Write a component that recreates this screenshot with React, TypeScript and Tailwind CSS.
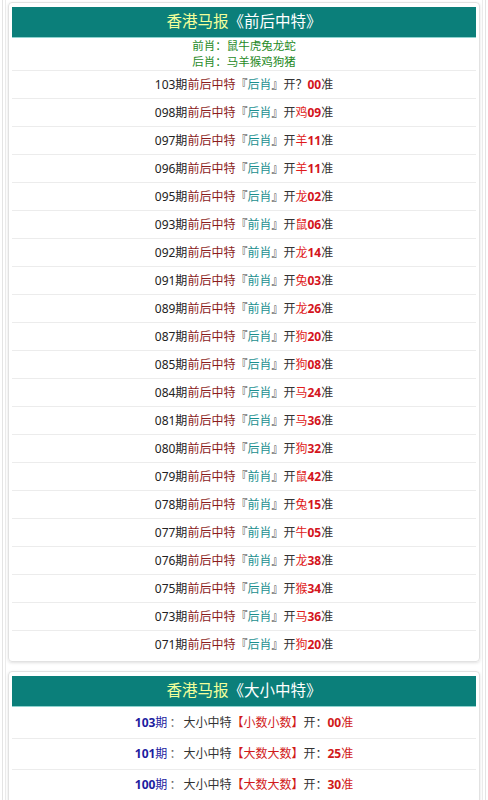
import React from 'react';

const rows: Array<[string, string, string, string]> = [
  ['103', '后肖', '？', '00'],
  ['098', '后肖', '鸡', '09'],
  ['097', '后肖', '羊', '11'],
  ['096', '后肖', '羊', '11'],
  ['095', '后肖', '龙', '02'],
  ['093', '前肖', '鼠', '06'],
  ['092', '前肖', '龙', '14'],
  ['091', '前肖', '兔', '03'],
  ['089', '前肖', '龙', '26'],
  ['087', '后肖', '狗', '20'],
  ['085', '后肖', '狗', '08'],
  ['084', '后肖', '马', '24'],
  ['081', '后肖', '马', '36'],
  ['080', '后肖', '狗', '32'],
  ['079', '前肖', '鼠', '42'],
  ['078', '前肖', '兔', '15'],
  ['077', '前肖', '牛', '05'],
  ['076', '前肖', '龙', '38'],
  ['075', '后肖', '猴', '34'],
  ['073', '后肖', '马', '36'],
  ['071', '后肖', '狗', '20'],
];

const sizeRows: Array<[string, string, string]> = [
  ['103', '小数小数', '00'],
  ['101', '大数大数', '25'],
  ['100', '大数大数', '30'],
];

const Header = ({ name }: { name: string }) => (
  <div className="bg-[#0b7f7a] h-[31px] flex items-center justify-center text-[15.5px] border-b border-[#8fd3cf]">
    <span className="text-[#f3ff9a]">香港马报</span>
    <span className="text-white">《{name}》</span>
  </div>
);

export default function App() {
  return (
    <div
      className="bg-white min-h-[800px] px-[2px] text-[#333]"
      style={{ fontFamily: '"Noto Sans", "Noto Sans CJK SC", sans-serif' }}
    >
      <div className="border-x border-[#e4e4e4] px-[2px] min-h-[800px]">
        <div className="border-x border-[#ececec] px-[2px] pt-[2px]">
          {/* 前后中特 */}
          <div className="border border-[#e2e2e2] rounded-[4px] shadow-[0_1px_3px_rgba(0,0,0,0.12)] p-[3px] pt-[4px]">
            <Header name="前后中特" />
            <div className="flex flex-col items-center text-[11.5px] leading-[16px] text-[#1f8a1f] h-[32px] justify-center">
              <div>前肖：鼠牛虎兔龙蛇</div>
              <div>后肖：马羊猴鸡狗猪</div>
            </div>
            {rows.map(([no, xiao, animal, num]) => (
              <div
                key={no}
                className="h-[28px] border-t border-[#ececec] flex items-center justify-center text-[12px]"
              >
                <span className="text-[#222]">{no}期</span>
                <span className="text-[#8b1c1c]">前后中特</span>
                <span className="text-[#444]">『</span>
                <span className="text-[#1a8f8f]">{xiao}</span>
                <span className="text-[#444]">』</span>
                <span className="text-[#333]">开</span>
                <span className={animal === '？' ? 'text-[#333]' : 'text-[#e01b1b]'}>{animal}</span>
                <span className="text-[#d4141c] font-bold">{num}</span>
                <span className="text-[#333]">准</span>
              </div>
            ))}
          </div>

          {/* 大小中特 */}
          <div className="mt-[9px] border border-[#e2e2e2] rounded-[4px] shadow-[0_1px_3px_rgba(0,0,0,0.12)] p-[3px] pt-[4px]">
            <Header name="大小中特" />
            {sizeRows.map(([no, kind, num], i) => (
              <div
                key={no}
                className={`h-[31px] flex items-center justify-center text-[12px] ${i > 0 ? 'border-t border-[#ececec]' : ''}`}
              >
                <span className="text-[#1c1ca0] font-bold">{no}</span>
                <span className="text-[#1c1ca0]">期</span>
                <span className="text-[#666] mx-[2px]">：</span>
                <span className="text-[#333]">大小中特</span>
                <span className="text-[#d11a1a]">【{kind}】</span>
                <span className="text-[#333]">开：</span>
                <span className="text-[#d11a1a] font-bold">{num}</span>
                <span className="text-[#d11a1a]">准</span>
              </div>
            ))}
          </div>
        </div>
      </div>
    </div>
  );
}
